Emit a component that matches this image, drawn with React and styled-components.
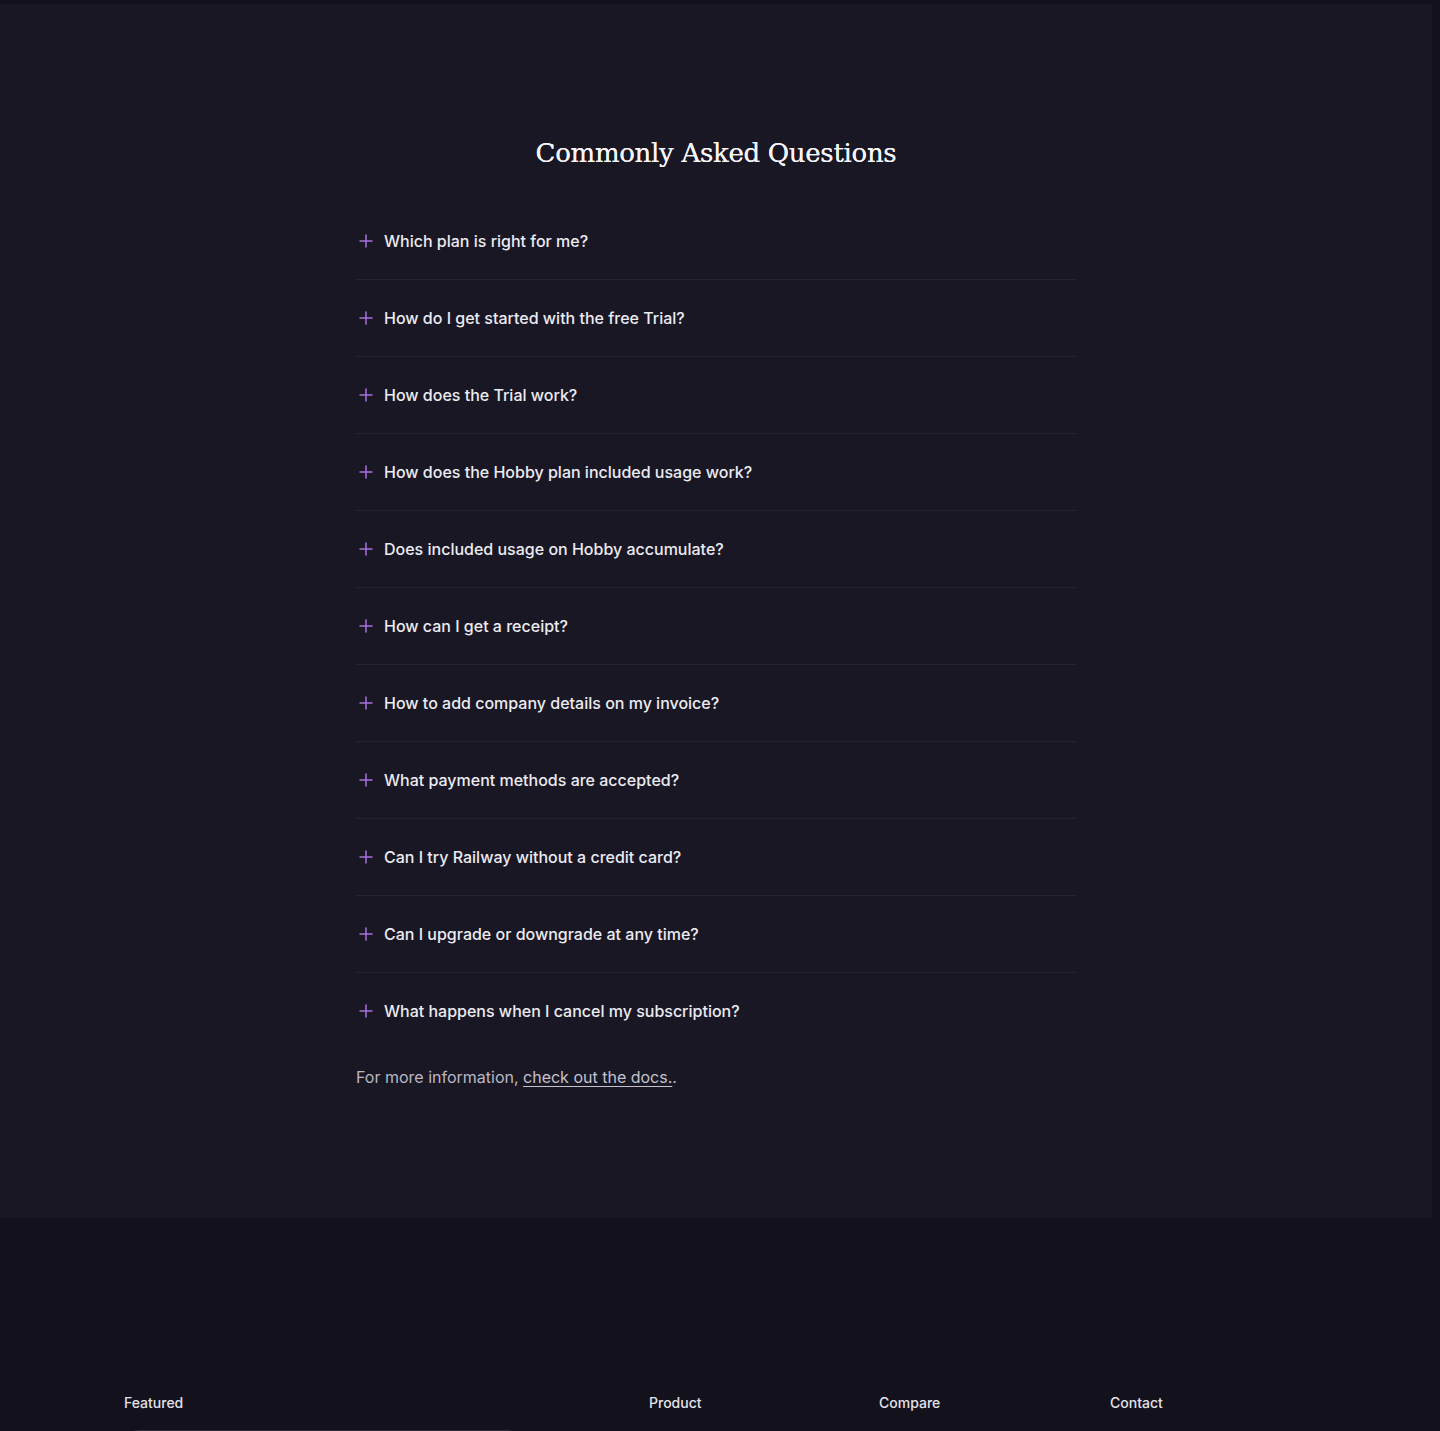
import React from "react";
import styled, { createGlobalStyle } from "styled-components";

const Global = createGlobalStyle`
  html, body { margin: 0; padding: 0; background: #13111c; }
  body { font-family: Inter, "Noto Sans", sans-serif; -webkit-font-smoothing: antialiased; }
  * { box-sizing: border-box; }
`;

const Page = styled.div`
  background: #13111c;
  padding-top: 4px;
  min-height: 1431px;
  overflow: hidden;
`;

const FaqSection = styled.section`
  width: calc(100% - 8px);
  background: #191724;
  padding: 133px 0 129px;
`;

const Container = styled.div`
  width: 720px;
  margin: 0 auto;
`;

const Heading = styled.h2`
  margin: 0 0 34px;
  text-align: center;
  font-family: "DejaVu Serif", "Liberation Serif", serif;
  font-weight: 400;
  font-size: 26px;
  line-height: 32px;
  color: #f6f5fa;
  letter-spacing: -0.3px;
  text-shadow: 0 0 0.4px #f6f5fa;
`;

const List = styled.div`
  display: flex;
  flex-direction: column;
`;

const Item = styled.div`
  height: 77px;
  display: flex;
  align-items: center;
  gap: 11px;
  padding: 0 0 1px 3px;
  border-bottom: 1px solid ${(p) => (p.$last ? "transparent" : "#25232f")};
  cursor: pointer;
`;

const Question = styled.span`
  font-size: 16px;
  font-weight: 500;
  color: #ecebf2;
  line-height: 24px;
`;

const Note = styled.p`
  margin: 15px 0 0;
  font-size: 16px;
  line-height: 24px;
  color: #b9b7c4;
`;

const DocLink = styled.a`
  color: #c4c2ce;
  text-decoration: underline;
  text-underline-offset: 3px;
`;

const Footer = styled.footer`
  background: #13111c;
  padding: 175px 124px 0;
  display: grid;
  grid-template-columns: 525px 230px 231px 1fr;
`;

const Column = styled.div`
  display: flex;
  flex-direction: column;
  gap: 17px;
`;

const ColTitle = styled.h4`
  margin: 0;
  font-size: 14px;
  font-weight: 500;
  line-height: 20px;
  color: #e4e3ea;
`;

const FeaturedCard = styled.div`
  width: 390px;
  height: 120px;
  margin-left: 4px;
  border: 1px solid #2d2b38;
  border-radius: 10px;
  background: #171521;
`;

const Plus = () => (
  <svg width="14" height="14" viewBox="0 0 14 14" fill="none">
    <path d="M7 1v12M1 7h12" stroke="#a670e0" strokeWidth="1.5" strokeLinecap="round" />
  </svg>
);

const questions = [
  "Which plan is right for me?",
  "How do I get started with the free Trial?",
  "How does the Trial work?",
  "How does the Hobby plan included usage work?",
  "Does included usage on Hobby accumulate?",
  "How can I get a receipt?",
  "How to add company details on my invoice?",
  "What payment methods are accepted?",
  "Can I try Railway without a credit card?",
  "Can I upgrade or downgrade at any time?",
  "What happens when I cancel my subscription?",
];

export default function App() {
  return (
    <Page>
      <Global />
      <FaqSection>
        <Container>
          <Heading>Commonly Asked Questions</Heading>
          <List>
            {questions.map((q, i) => (
              <Item key={q} $last={i === questions.length - 1}>
                <Plus />
                <Question>{q}</Question>
              </Item>
            ))}
          </List>
          <Note>
            For more information, <DocLink href="#">check out the docs.</DocLink>.
          </Note>
        </Container>
      </FaqSection>
      <Footer>
        <Column>
          <ColTitle>Featured</ColTitle>
          <FeaturedCard />
        </Column>
        <Column>
          <ColTitle>Product</ColTitle>
        </Column>
        <Column>
          <ColTitle>Compare</ColTitle>
        </Column>
        <Column>
          <ColTitle>Contact</ColTitle>
        </Column>
      </Footer>
    </Page>
  );
}
